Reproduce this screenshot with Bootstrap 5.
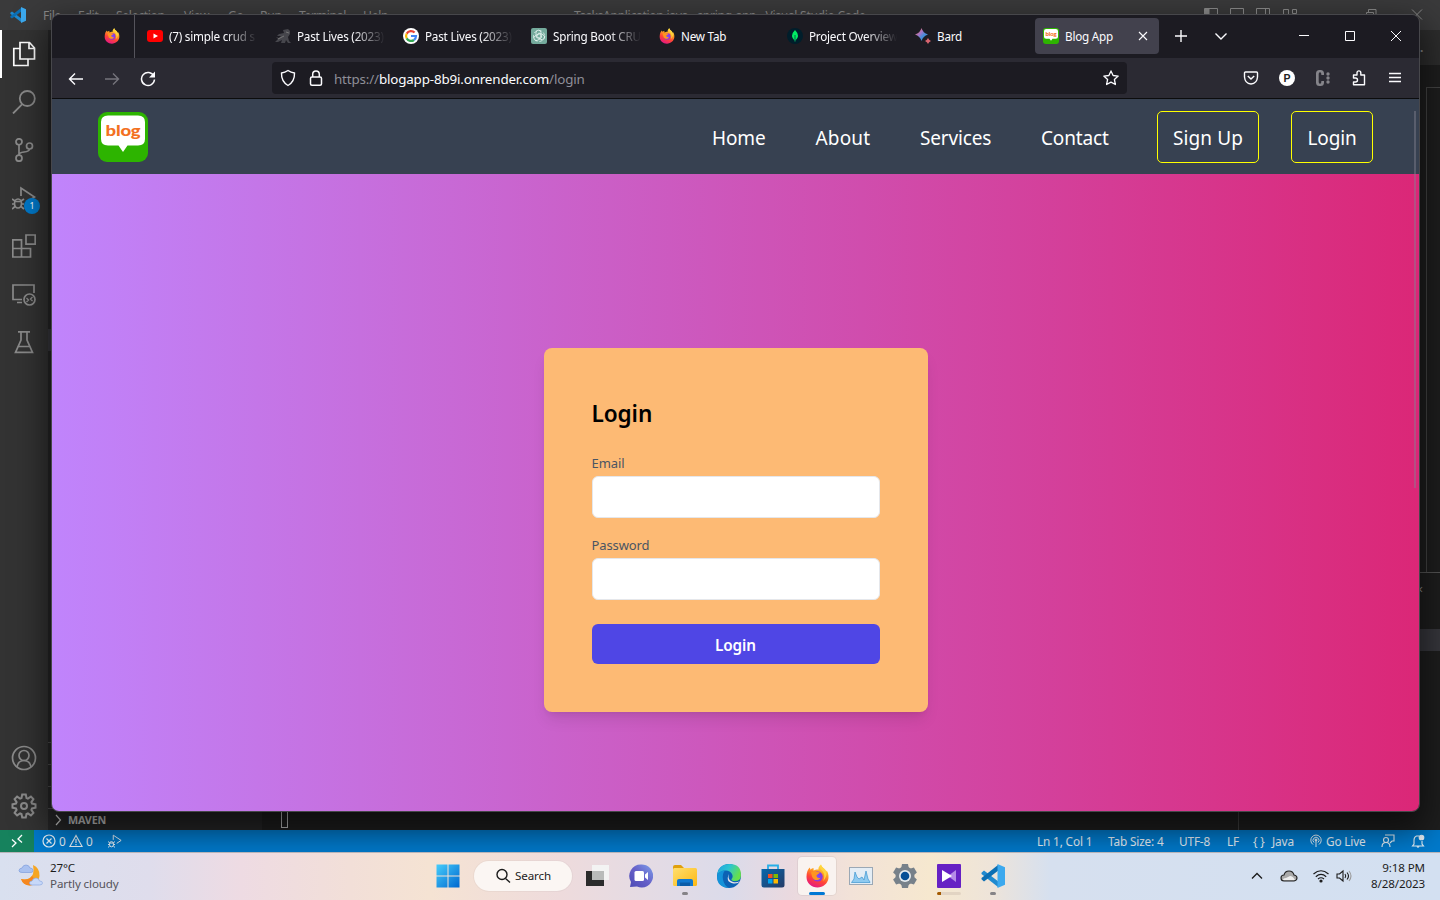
<!DOCTYPE html>
<html lang="en">
<head>
<meta charset="utf-8">
<title>Blog App</title>
<link href="https://cdn.jsdelivr.net/npm/bootstrap@5.3.0/dist/css/bootstrap.min.css" rel="stylesheet">
<style>
body{width:1440px;height:900px;overflow:hidden;background:#1e1e1e;font-family:"Noto Sans","Open Sans",sans-serif;font-size:12px;line-height:16px}
svg{display:block;flex:none}
.ln{fill:none;stroke:currentColor}
/* editor */
.code-win{height:852px;color:#8a8a8a}
.titlebar{height:30px;background:#3a3a3b;color:#8b8b8b;font-size:12.1px;letter-spacing:-.3px}
.titlebar span{white-space:nowrap;flex:none;padding-top:2px}
.activity{width:48px;background:#333;color:#8b8b8b}
.activity>div{height:48px;width:48px}
.activity .current{color:#fff;border-left:2px solid #fff}
.activity .current svg{margin-left:-2px}
.dot{left:24px;top:24px;width:16px;height:16px;background:#007acc;color:#fff;font-size:9px;border-radius:8px}
.side{width:214px;background:#252526}
.side .sec{height:22px;border-top:1px solid #4a4a4b}
.side .sel{height:22px;background:#37373d}
.maven{font-size:10.8px;font-weight:700;color:#c4c4c4;letter-spacing:-.2px}
.tabstrip{height:35px;background:#2d2d2d}
.mini{width:14px;height:485px;border:1px solid #444;border-right:0;border-bottom:0;margin-top:22px}
.panel-b{border-top:1px solid #555;height:258px}
.statusbar{height:22px;background:#007acc;color:#e8f1f8;font-size:11.8px;letter-spacing:-.15px}
.remote{width:34px;background:#16825d;color:#fff}
.statusbar .it{white-space:nowrap;flex:none}
/* browser */
.fx{left:51px;top:14px;width:1369px;height:798px;border:1px solid #47474b;border-radius:8px;overflow:hidden}
.fx-shadow{left:51px;top:14px;width:1369px;height:798px;border-radius:8px;box-shadow:0 14px 34px 5px rgba(0,0,0,.56);clip-path:inset(-20px -60px -40px -60px)}
.tabs-row{height:43px;background:#1c1b22;color:#fbfbfe;padding-bottom:1px}
.ftab{width:128px;flex:none;height:36px;font-size:11.7px;letter-spacing:-.22px}
.ftab .lbl{width:90px;white-space:nowrap;margin-left:6px}
.fade-r .lbl{-webkit-mask-image:linear-gradient(90deg,#000 62%,transparent 98%);mask-image:linear-gradient(90deg,#000 62%,transparent 98%)}
.ftab.on{width:124px;background:#42414d;border-radius:4px}
.pin{width:83px;height:43px;margin-bottom:-1px;border-right:1px solid #55545c;padding-right:14px}
.cap{width:46px}
.tools{height:40px;background:#2b2a33;color:#fbfbfe}
.tools .tb{width:36px}
.urlbar{width:855px;height:32px;background:#1c1b22;border-radius:4px;margin-left:106px}
.url{font-size:13.4px;color:#8f8f98;letter-spacing:-.16px;padding-top:2px}
.url b{font-weight:400;color:#fbfbfe}
/* page */
.site-nav{height:76px;border-top:1px solid #0c0c0d;background:#374151;color:#fff;font-size:19px;letter-spacing:-.15px}
.site-nav a{color:#fff;text-decoration:none;flex:none;white-space:nowrap}
.site-nav a.tx{padding-top:2px}
.site-nav a.ob{border:1px solid #ff0;border-radius:5px;height:52px;padding-top:2px}
.site-body{background:linear-gradient(90deg,#c084fc,#db2777)}
.login-box{width:384px;height:364px;padding:48px;background:#fdba74;border-radius:8px;box-shadow:0 10px 15px -3px rgba(0,0,0,.1),0 4px 6px -4px rgba(0,0,0,.1);margin-top:174px}
.login-box h1{font-size:22.6px;line-height:36px;height:32px;font-weight:600;color:#000;margin-bottom:24px;letter-spacing:-.1px}
.login-box label{display:block;font-size:13px;line-height:23px;height:24px;color:#4b5563;letter-spacing:-.1px}
.login-box .form-control{height:42px;border:1px solid #e5e7eb;border-radius:6px;background:#fff}
.login-box .btn{height:40px;background:#4f46e5;border:0;border-radius:6px;color:#fff;font-size:15.3px;font-weight:600;line-height:30px;letter-spacing:-.1px}
.thumb{left:1362px;top:96px;width:2px;height:377px;background:rgba(130,130,145,.45)}
/* taskbar */
.taskbar{height:48px;box-shadow:inset 0 1px #b8b4b8;color:#1b1b1b;font-size:11.6px;letter-spacing:-.12px;background:linear-gradient(90deg,#d9e0ef 0,#dfddec 150px,#eedbe3 240px,#f2dfd8 350px,#f5e3d3 430px,#eedbdc 560px,#e3dbe5 660px,#dbdbea 730px,#ead9df 790px,#f2e2d8 850px,#f6e8cf 930px,#eee4d9 990px,#d6e0ef 1050px,#d3e0f1 100%)}
.slot{width:44px;height:48px;flex:none}
.slot.act::before{content:"";position:absolute;left:3px;top:5px;width:38px;height:38px;border-radius:4px;background:#f9f3f0;box-shadow:0 0 0 1px rgba(0,0,0,.05)}
.slot svg{position:relative}
.run{height:3px;width:6px;border-radius:2px;background:#858387;top:40px;left:19px}
.act .run{width:16px;left:14px;background:#0078d4}
.find{width:98px;height:30px;border-radius:15px;background:#fbf6f3;margin:0 3px 0 4px;padding-left:21px;box-shadow:0 0 0 1px rgba(0,0,0,.03)}
.meteo{width:426px;padding-left:18px}
.clock{width:71px;padding-right:15px;line-height:16px;white-space:nowrap}
</style>
</head>
<body>
<svg width="0" height="0" class="position-absolute">
<defs>
<linearGradient id="gf" x1=".75" y1="0" x2=".3" y2="1"><stop offset="0" stop-color="#fff44f"/><stop offset=".35" stop-color="#ffa01f"/><stop offset=".65" stop-color="#ff4437"/><stop offset="1" stop-color="#e31587"/></linearGradient>
<radialGradient id="gp"><stop offset="0" stop-color="#7b4dff"/><stop offset="1" stop-color="#9035d8"/></radialGradient>
<linearGradient id="gw" x1="0" y1="0" x2="1" y2="1"><stop offset="0" stop-color="#45cdfb"/><stop offset="1" stop-color="#0067cf"/></linearGradient>
<linearGradient id="ge" x1="0" y1="0" x2="1" y2=".4"><stop offset="0" stop-color="#1fa0e0"/><stop offset=".5" stop-color="#2bc4d2"/><stop offset="1" stop-color="#66e04c"/></linearGradient>
<linearGradient id="gb" x1="0" y1="0" x2="1" y2="1"><stop offset="0.1" stop-color="#e07050"/><stop offset=".4" stop-color="#a675c8"/><stop offset=".6" stop-color="#4b8bd8"/><stop offset="1" stop-color="#2b9ad8"/></linearGradient>
<linearGradient id="gy" x1="0" y1="0" x2="1" y2="1"><stop offset="0" stop-color="#ffdf6e"/><stop offset="1" stop-color="#fdb813"/></linearGradient>
<linearGradient id="gc" x1="1" y1="0" x2="0" y2="1"><stop offset="0" stop-color="#7ea1ec"/><stop offset=".5" stop-color="#6660c8"/><stop offset="1" stop-color="#4b49b5"/></linearGradient>
<linearGradient id="gs" x1="0" y1="0" x2="1" y2="1"><stop offset="0" stop-color="#0668ad"/><stop offset="1" stop-color="#263a66"/></linearGradient>
<symbol id="fox" viewBox="0 0 24 24"><path fill="url(#gf)" d="M1 13C1 8.500 2.500 5 4.300 3.600L5 5.800C6 4.700 7 4.200 8 4L8.200 6.700C10 5.200 12 5.500 13 5.500C12.500 3.500 14 1.500 15.500.5C15.700 2.600 17.400 3.600 19 5C20 6 20.200 7 20.400 8L21.200 6.500C22.500 8.500 23.300 11 23 14C22.400 19.600 17.500 23.500 12 23.500C6 23.500 1 19 1 13Z"/><circle cx="12.200" cy="12.600" r="5" fill="url(#gp)"/><path fill="#ff9620" d="M5.500 8.500C7.500 7 10 7.200 11.500 8L14.500 8.300C14 10 11.500 10.300 11 11.400C11 13.300 12.500 14.500 15 13.700C13.500 17 8 17 6.700 13Z"/><path fill="#ffd33d" d="M15.500.5C14.200 2.700 14.500 4.700 16.500 6.500C19 9 19.600 13 17.600 17C21 13.500 22 9 20 6C18.500 4 16 3 15.500.5Z"/></symbol>
<symbol id="vsc" viewBox="0 0 24 24"><path fill="#1f8ad0" d="M.5 8.800 3 6.600 17 17.200V23L.5 10z"/><path fill="#0b6fb4" d="M.5 15.200 3 17.400 17 6.800V1L.5 14z"/><path fill="#3ca9ee" d="M16.500 0 24 3.300V20.700L16.500 24z"/></symbol>
<symbol id="blog" viewBox="0 0 50 50"><rect width="50" height="50" rx="9" fill="#2db400"/><path fill="#fff" d="M10 3.500H40Q47 3.500 47 10V27Q47 33.500 40 33.500H29.500L25 40L20.500 33.500H10Q3 33.500 3 27V10Q3 3.500 10 3.500Z"/><text x="25" y="24" text-anchor="middle" textLength="35" lengthAdjust="spacingAndGlyphs" font-family="Lato,sans-serif" font-weight="900" font-size="15.500" fill="#f37021">blog</text></symbol>
<symbol id="bug" viewBox="0 0 24 24"><g class="ln" stroke-width="1.700"><path d="M9 10V2L22.500 11 15 16"/><ellipse cx="6" cy="17.500" rx="3.500" ry="4.500"/><path d="M3 15.500H9M0 13 3 15M12 13 9 15M0 18H3M9 18H12M0 23 3 20.500M12 23 9 20.500"/></g></symbol>
</defs></svg>

<div class="d-flex flex-column position-relative">
<main class="code-win d-flex flex-column">
  <div class="titlebar d-flex align-items-center">
    <svg width="16" height="16" style="margin-left:10px"><use href="#vsc"/></svg>
    <span class="ms-3" style="width:36px;padding-left:1px">File</span><span style="width:38px">Edit</span><span style="width:68px">Selection</span><span style="width:44px">View</span><span style="width:32px">Go</span><span style="width:39px">Run</span><span style="width:64px">Terminal</span><span style="width:211px">Help</span>
    <span style="width:629px">TasksApplication.java - spring-app - Visual Studio Code</span>
    <svg class="ln" width="237" height="30" viewBox="0 0 237 30"><path d="M1.500 8.500h13v12H1.500zM27.500 8.500h13v12h-13zM53.500 8.500h13v12h-13zM62.500 8.500v12M80.500 9.500h5v9h-5zM89.500 9.500h4v4h-4zM117 14.500h10M163.500 12.500h7v7h-7zM165.500 12V9.500h7.500v7H171M209 9.500l10 10M219 9.500l-10 10"/><path fill="currentColor" d="M2 9h4v11H2z"/></svg>
  </div>
  <div class="d-flex flex-grow-1">
    <aside class="activity d-flex flex-column">
      <div class="current d-flex align-items-center justify-content-center"><svg class="ln" width="24" height="26" viewBox="0 0 24 26" stroke-width="1.700"><path d="M8 1.500h9.500L22.500 7v11H8zM17 2v5.500h5M8 7.500H1.800V24.500H16V18.500"/></svg></div>
      <div class="d-flex align-items-center justify-content-center"><svg class="ln" width="24" height="24" stroke-width="1.800"><circle cx="15.300" cy="8.500" r="7.500"/><path d="M10 14.300 1 23.500"/></svg></div>
      <div class="d-flex align-items-center justify-content-center"><svg class="ln" width="24" height="24" stroke-width="1.700"><circle cx="7" cy="3.800" r="3"/><circle cx="7" cy="20.200" r="3"/><circle cx="17.500" cy="8" r="3"/><path d="M7 6.800v10.500M7 17c0-5 10-1 10.500-6"/></svg></div>
      <div class="d-flex align-items-center justify-content-center position-relative"><svg width="24" height="24"><use href="#bug"/></svg><span class="dot position-absolute d-flex align-items-center justify-content-center">1</span></div>
      <div class="d-flex align-items-center justify-content-center"><svg class="ln" width="24" height="24" stroke-width="1.700"><path d="M.8 5.800h8.700v8.700h9V23H.8zM.8 14.500h8.700V23M14 1h9.200v9.200H14z"/></svg></div>
      <div class="d-flex align-items-center justify-content-center"><svg class="ln" width="24" height="24" stroke-width="1.700"><path d="M10 17.500H1V3h21v8M5 20.500h5"/><circle cx="17.500" cy="17.500" r="5.500"/><path stroke-width="1.300" d="m14.500 16 2 2-2 2M20.500 15l-2 2 2 2"/></svg></div>
      <div class="d-flex align-items-center justify-content-center"><svg class="ln" width="24" height="24" stroke-width="1.700"><path d="M6 1.800h12M9 2v8L3.500 22.300h17L15 10V2M6 16.500h12"/></svg></div>
      <div class="d-flex align-items-center justify-content-center mt-auto"><svg class="ln" width="26" height="26" viewBox="0 0 26 26" stroke-width="1.700"><circle cx="13" cy="13" r="11.500"/><circle cx="13" cy="10.500" r="5"/><path d="M6 22c.5-4 3.500-6.500 7-6.500s6.500 2.500 7 6.500"/></svg></div>
      <div class="d-flex align-items-center justify-content-center"><svg class="ln" width="26" height="26" viewBox="-13 -13 26 26" stroke-width="2"><path d="M-2.500-8-1.800-11.500H1.800L2.500-8 3.900-7.400 6.900-9.400 9.400-6.900 7.400-3.900 8-2.500 11.500-1.800V1.800L8 2.500 7.400 3.900 9.400 6.900 6.900 9.400 3.900 7.400 2.500 8 1.800 11.500H-1.800L-2.500 8-3.900 7.400-6.900 9.400-9.400 6.900-7.400 3.900-8 2.500-11.500 1.800V-1.800L-8-2.500-7.400-3.900-9.400-6.900-6.900-9.400-3.900-7.400Z"/><circle r="3"/></svg></div>
    </aside>
    <section class="side d-flex flex-column">
      <div class="sel" style="margin-top:299px"></div>
      <div class="sec mt-auto"></div><div class="sec"></div><div class="sec"></div>
      <div class="sec maven d-flex align-items-center"><svg class="ln ms-1 me-1" width="12" height="12" stroke-width="1.200"><path d="m4 1 4.500 5L4 11"/></svg>MAVEN</div>
    </section>
    <section class="flex-grow-1 d-flex flex-column">
      <div class="tabstrip d-flex align-items-center justify-content-end fw-bold"><span style="width:20px">.</span></div>
      <div class="d-flex justify-content-end flex-grow-1"><div class="mini"></div></div>
      <div class="panel-b d-flex">
        <div class="d-flex align-items-end" style="width:977px;border-right:1px solid #3f3f3f"><span style="width:7px;height:18px;border:1px solid #bbb;margin:0 0 2px 19px"></span></div>
        <div class="flex-grow-1"><div class="text-end" style="padding:9px 17px 0 0;height:56px">×</div><div style="height:22px;background:#37373d"></div></div>
      </div>
    </section>
  </div>
  <footer class="statusbar d-flex align-items-stretch">
    <div class="remote d-flex align-items-center justify-content-center"><svg class="ln" width="14" height="14" stroke-width="1.300"><path d="m2 5.500 4 3.500-4 4M12 1 8 5l4 3.500"/></svg></div>
    <div class="d-flex align-items-center flex-grow-1 ps-2"><svg class="ln" width="14" height="14" stroke-width="1.200"><circle cx="7" cy="7" r="6"/><path d="m4.500 4.500 5 5m0-5-5 5"/></svg><span style="width:13px;padding-left:3px">0</span><svg class="ln" width="14" height="14" stroke-width="1.200"><path d="M7 1.500.9 12.500h12.200zM7 5v4M7 10v1.300"/></svg><span style="width:25px;padding-left:3px">0</span><svg width="14" height="14"><use href="#bug"/></svg></div>
    <div class="d-flex align-items-center" style="width:403px"><span class="it" style="width:71px">Ln 1, Col 1</span><span class="it" style="width:71px">Tab Size: 4</span><span class="it" style="width:48px">UTF-8</span><span class="it" style="width:26px">LF</span><span class="it" style="width:19px">{ }</span><span class="it" style="width:38px">Java</span><svg class="ln" width="12" height="14" stroke-width="1"><path d="M3 10.500a5.200 5.200 0 1 1 6 0M4 8.500a3 3 0 1 1 4 0M6 6v7"/><circle cx="6" cy="6" r="1" fill="currentColor"/></svg><span class="it" style="width:59px;padding-left:4px">Go Live</span><svg class="ln me-3" width="14" height="14" stroke-width="1.100"><path d="M4 1h9v6h-2L9 9M1 13c0-6 8-6 8 0"/><circle cx="5" cy="6" r="2.500"/></svg><svg class="ln" width="14" height="14" stroke-width="1.100"><path d="M8 2H5.500Q3 3 3 6v4l-1.500 2h11L11 10V7M6 12.500q1 1.500 2 0"/><circle cx="10.500" cy="3.500" r="2.300" fill="currentColor"/></svg></div>
  </footer>
</main>
<div class="fx-shadow position-absolute"></div>

<section class="fx position-absolute d-flex flex-column">
  <div class="tabs-row d-flex align-items-center">
    <div class="pin d-flex align-items-center justify-content-end"><svg width="16" height="16" style="margin-top:-2px"><use href="#fox"/></svg></div>
    <div class="d-flex" style="padding-left:4px">
      <div class="ftab fade-r ps-2 d-flex align-items-center"><svg width="16" height="16"><rect y="2" width="16" height="12" rx="3" fill="red"/><path fill="#fff" d="m6.500 5.500 4.500 2.500-4.500 2.500z"/></svg><span class="lbl">(7) simple crud s</span></div>
      <div class="ftab fade-r ps-2 d-flex align-items-center"><svg width="16" height="16"><path fill="#46464c" d="M9 5 8 2l5-1 2 2v3l-2 3 1 4 2 2h-3l-2-3-1 3H6l1-3-4 2H0l3-3-2-2 3 1 2-2H2l2-2z"/><path stroke="#777" d="m11 4 3 1M3 11l6-3"/></svg><span class="lbl">Past Lives (2023)</span></div>
      <div class="ftab fade-r ps-2 d-flex align-items-center"><svg width="16" height="16"><circle cx="8" cy="8" r="8" fill="#fff"/><g fill="none" stroke-width="2.200"><path stroke="#ea4335" d="M3.700 5.600A5 5 0 0 1 11.600 4.600"/><path stroke="#fbbc05" d="M3.700 5.600A5 5 0 0 0 3.700 10.400"/><path stroke="#34a853" d="M3.700 10.400A5 5 0 0 0 11 12"/><path stroke="#4285f4" d="M11 12A5 5 0 0 0 13 8H8"/></g></svg><span class="lbl">Past Lives (2023)</span></div>
      <div class="ftab fade-r ps-2 d-flex align-items-center"><svg width="16" height="16"><rect width="16" height="16" rx="2" fill="#74aa9c"/><g transform="translate(8 8)" fill="none" stroke="#e8f5f2" stroke-width=".8"><rect x="-3" y="-5.800" width="5" height="8" rx="2.500"/><rect x="-3" y="-5.800" width="5" height="8" rx="2.500" transform="rotate(120)"/><rect x="-3" y="-5.800" width="5" height="8" rx="2.500" transform="rotate(240)"/><circle r="5.500" stroke-dasharray="3 2"/></g></svg><span class="lbl">Spring Boot CRU</span></div>
      <div class="ftab ps-2 d-flex align-items-center"><svg width="16" height="16"><use href="#fox"/></svg><span class="lbl">New Tab</span></div>
      <div class="ftab fade-r ps-2 d-flex align-items-center"><svg width="16" height="16"><circle cx="8" cy="8" r="8" fill="#001e2b"/><path fill="#00ed64" d="M8 2q6 6 0 11Q2 8 8 2z"/><path stroke="#00684a" d="M8 7v7"/></svg><span class="lbl">Project Overview</span></div>
      <div class="ftab ps-2 d-flex align-items-center"><svg width="16" height="16"><path fill="url(#gb)" d="M6.500 0Q8 5 13 6.500 8 8 6.500 13 5 8 0 6.500 5 5 6.500 0z"/><path fill="#d96570" d="M13 10q.8 2.200 3 3-2.200.8-3 3-.8-2.200-3-3 2.200-.8 3-3z"/></svg><span class="lbl">Bard</span></div>
      <div class="ftab on ps-2 d-flex align-items-center"><svg width="16" height="16"><use href="#blog"/></svg><span class="lbl" style="width:73px">Blog App</span><svg class="ln" width="10" height="10" stroke-width="1.100"><path d="m1 1 8 8m0-8-8 8"/></svg></div>
    </div>
    <svg class="ln" width="76" height="16" style="margin-left:8px" stroke-width="1.400"><path d="M14 2v12M8 8h12M48.500 5.500 54 11l5.500-5.500"/></svg>
    <div class="d-flex ms-auto"><div class="cap d-flex justify-content-center"><svg class="ln" width="12" height="12"><path d="M1 5.500h10"/></svg></div><div class="cap d-flex justify-content-center"><svg class="ln" width="12" height="12"><path d="M1.500 1.500h9v9h-9z"/></svg></div><div class="cap d-flex justify-content-center"><svg class="ln" width="12" height="12"><path d="m1 1 10 10M11 1 1 11"/></svg></div></div>
  </div>
  <div class="tools d-flex align-items-center">
    <div class="d-flex" style="padding:1px 0 0 6px"><div class="tb d-flex justify-content-center"><svg class="ln" width="16" height="16" stroke-width="1.400"><path d="M15 8H1.500M7 2.500 1.500 8 7 13.500"/></svg></div><div class="tb d-flex justify-content-center"><svg class="ln" width="16" height="16" stroke-width="1.400" style="color:#75747c"><path d="M1 8h13.500M9 2.500 14.500 8 9 13.500"/></svg></div><div class="tb d-flex justify-content-center"><svg class="ln" width="16" height="16" stroke-width="1.500"><path d="M13.800 5A6.500 6.500 0 1 0 14.500 8.500"/><path fill="currentColor" stroke="none" d="M15 .5V6.500H9z"/></svg></div></div>
    <div class="urlbar d-flex align-items-center"><svg class="ln ms-2" width="16" height="18" stroke-width="1.400"><path d="M8 1.500Q11 3.500 14.500 4 14.800 12.500 8 16.500 1.200 12.500 1.500 4 5 3.500 8 1.500z"/></svg><svg class="ln" width="14" height="16" style="margin:0 11px 0 13px" stroke-width="1.500"><rect x="1.500" y="7" width="11" height="8.200" rx="1.500"/><path d="M3.700 7V4.200a3.300 3.300 0 0 1 6.600 0V7"/></svg><span class="url"><span>https://</span><b>blogapp-8b9i.onrender.com</b>/login</span><svg class="ln ms-auto me-2" width="16" height="16" stroke-width="1.300" stroke-linejoin="round"><path d="m8 .9 2.100 4.600 5.100.6-3.800 3.400 1 5L8 12.100l-4.400 2.400 1-5L.8 6.100l5.100-.6z"/></svg></div>
    <div class="d-flex align-items-center" style="margin-left:106px">
      <div class="tb d-flex justify-content-center"><svg class="ln" width="16" height="16" stroke-width="1.400"><path d="M2.500 2h11q1 0 1 1v4q-.5 6.500-6.500 7Q2 13.500 1.500 7V3q0-1 1-1zM4.800 6 8 9l3.200-3"/></svg></div>
      <div class="tb d-flex justify-content-center"><svg width="16" height="16"><circle cx="8" cy="8" r="8" fill="#fff"/><text x="8" y="11.800" text-anchor="middle" font-size="10.500" font-weight="700" fill="#222" font-family="Liberation Sans">P</text></svg></div>
      <div class="tb d-flex justify-content-center"><svg width="16" height="16" fill="#85848a"><path d="M4.500 0h1Q9 0 9 3.500V5H6.300V4Q6.300 2.200 5 2.200T3.700 4v8q0 1.800 1.300 1.800T6.300 12v-1H9v1.500Q9 16 5.500 16h-1Q1 16 1 12.500v-9Q1 0 4.500 0z"/><circle cx="13" cy="4" r="1.700"/><circle cx="13" cy="8" r="1.700"/><circle cx="13" cy="12" r="1.700"/></svg></div>
      <div class="tb d-flex justify-content-center"><svg class="ln" width="16" height="16" stroke-width="1.400" stroke-linejoin="round"><path d="M2.500 8V5H6V2.800a1.900 1.900 0 0 1 3.800 0V5h3.700v9.700h-11V12h2a2 2 0 0 0 0-4z"/></svg></div>
      <div class="tb d-flex justify-content-center"><svg class="ln" width="14" height="14" stroke-width="1.300"><path d="M1 2.500h12M1 6.500h12M1 10.500h12"/></svg></div>
    </div>
  </div>
  <nav class="site-nav d-flex align-items-center">
    <a href="#" style="margin-left:46px"><svg width="50" height="50"><use href="#blog"/></svg></a>
    <a href="#" class="tx ms-auto" style="width:103.500px">Home</a><a href="#" class="tx" style="width:104.500px;letter-spacing:.15px">About</a><a href="#" class="tx" style="width:121px">Services</a><a href="#" class="tx" style="width:116px">Contact</a>
    <a href="#" class="ob d-flex align-items-center justify-content-center" style="width:102px;margin-right:32px;letter-spacing:.1px">Sign Up</a><a href="#" class="ob d-flex align-items-center justify-content-center" style="width:82px;margin-right:46px">Login</a>
  </nav>
  <div class="site-body flex-grow-1 d-flex justify-content-center align-items-start">
    <form class="login-box"><h1>Login</h1>
      <label for="em">Email</label><input id="em" type="email" class="form-control mb-3">
      <label for="pw">Password</label><input id="pw" type="password" class="form-control mb-4">
      <button type="button" class="btn w-100">Login</button></form>
  </div>
  <div class="thumb position-absolute"></div>
</section>

<footer class="taskbar d-flex align-items-center position-relative">
  <div class="meteo d-flex align-items-center"><svg width="26" height="26" viewBox="0 0 26 26"><path fill="#f6a623" d="M15 2q7 3 6.500 11T12 22.500Q5 22 3 16q9 2 12-5 1-4 0-9z"/><path fill="#f5871f" d="M3 16q8 2 11-3l5 6q-3 3.500-7 3.500Q5 22 3 16z"/><path fill="#a9c1f0" stroke="#7e9ddd" stroke-width=".7" d="M4 9.500Q1 9.500 1 7.500T4 5q1-3 4-3t4 3q3 0 3 2.500t-3 2z"/><path fill="#c7d8f8" stroke="#8eaae3" stroke-width=".7" d="M14 22q-2.500 0-2.500-2T14 18q1-3 4-3t3.500 3q3 0 3 2t-3 2z"/></svg><div style="margin-left:6px"><div>27°C</div><div style="color:#55535a">Partly cloudy</div></div></div>
  <div class="slot position-relative d-flex align-items-center justify-content-center"><svg width="24" height="24"><path fill="url(#gw)" d="M.5.500h11v11H.5zM12.500.500h11v11h-11zM.5 12.500h11v11H.5zM12.500 12.500h11v11h-11z"/></svg></div>
  <div class="find d-flex align-items-center flex-shrink-0"><svg class="ln me-1" width="16" height="16" stroke-width="1.400"><circle cx="7" cy="6.500" r="5"/><path d="m10.500 10.500 4.500 4"/></svg>Search</div>
  <div class="slot position-relative d-flex align-items-center justify-content-center"><svg width="24" height="24"><path fill="#2b2b2b" d="M1 7h18v15H1z"/><path fill="#f3f3f3" d="M7 1h17v15H7z"/><path fill="#b9bbba" d="M7 7h12v9H7z"/></svg></div>
  <div class="slot position-relative d-flex align-items-center justify-content-center"><svg width="24" height="24"><path fill="url(#gc)" d="M12 .5a11.500 11.500 0 1 1-4 22L1 23l1-5A11.500 11.500 0 0 1 12 .5z"/><rect x="5.500" y="7" width="9.500" height="10" rx="1.500" fill="#fff"/><path fill="#fff" d="m16 10.500 3-2.500v8l-3-2.500z"/></svg></div>
  <div class="slot position-relative d-flex align-items-center justify-content-center"><svg width="24" height="24"><path fill="#e0a00c" d="M0 3q0-2 2-2h6l3 3v4H0z"/><rect y="4" width="24" height="18" rx="1.500" fill="url(#gy)"/><path fill="#1078d0" d="M4 22v-5q0-2 2-2h12q2 0 2 2v5z"/><path fill="#0a5ca8" d="M7 18.500h10V22H7z"/></svg><i class="run position-absolute"></i></div>
  <div class="slot position-relative d-flex align-items-center justify-content-center"><svg width="24" height="24"><circle cx="12" cy="12" r="12" fill="#0c62b4"/><path fill="url(#ge)" d="M0 12Q1 0 12.500 0T24 11q0 6-6 6-4 0-3.500-2 2-2 .5-5-2-3.500-6-3.500Q2 6.500 0 12z"/><path fill="#1492d9" d="M0 13Q0 7 8 6.500q-3 3-2 9 1 6 6 8.500Q0 23 0 13z"/><path fill="#e8e4eb" d="M12 10q-2 6 4 8 4 1 7-1-2 3-6.500 2.500Q8 18 12 10z"/></svg></div>
  <div class="slot position-relative d-flex align-items-center justify-content-center"><svg width="24" height="24"><path fill="none" stroke="#28afe8" stroke-width="1.800" d="M7 6V1.500h10V6"/><path fill="url(#gs)" d="M.5 5h23v16q0 2.500-2.500 2.500H3Q.5 23.500.5 21z"/><path fill="#f25022" d="M7 10h4.500v4H7z"/><path fill="#7fba00" d="M12.500 10H17v4h-4.500z"/><path fill="#00a4ef" d="M7 15h4.500v4.500H7z"/><path fill="#ffb900" d="M12.500 15H17v4.500h-4.500z"/></svg></div>
  <div class="slot act position-relative d-flex align-items-center justify-content-center"><svg width="25" height="24"><use href="#fox"/></svg><i class="run position-absolute"></i></div>
  <div class="slot position-relative d-flex align-items-center justify-content-center"><svg width="24" height="24"><rect x=".5" y="3.500" width="23" height="17" fill="#e4edf5" stroke="#9ba8b5"/><path fill="#8ecaf0" stroke="#3c95d0" stroke-width=".7" d="M2.500 18.500 5 15l1-7 2 5 2 2 3-2 2 3 2-9 2 8 2 3v.5z"/></svg></div>
  <div class="slot position-relative d-flex align-items-center justify-content-center"><svg width="24" height="24" viewBox="-12 -12 24 24"><g fill="#77818a"><circle r="9.500"/><path id="t" d="M-3-12H3L4-7H-4z"/><use href="#t" transform="rotate(60)"/><use href="#t" transform="rotate(120)"/><use href="#t" transform="rotate(180)"/><use href="#t" transform="rotate(240)"/><use href="#t" transform="rotate(300)"/></g><circle r="6" fill="#e6ebee"/><circle r="4.300" fill="#064f96"/></svg></div>
  <div class="slot position-relative d-flex align-items-center justify-content-center"><svg width="24" height="24"><rect width="24" height="24" rx="1" fill="#6621c4"/><path fill="#b58be8" d="M19 6v12l-8-6z"/><path fill="#fff" d="M5 6v12l10-6z"/></svg><i class="run position-absolute" style="left:10px;width:24px;background:linear-gradient(90deg,#a35a00 4px,#e2d4c3 4px)"></i></div>
  <div class="slot position-relative d-flex align-items-center justify-content-center"><svg width="24" height="24"><use href="#vsc"/></svg><i class="run position-absolute"></i></div>
  <div class="d-flex align-items-center ms-auto"><svg class="ln" width="12" height="12" stroke-width="1.300"><path d="m1 8.500 5-5 5 5"/></svg><svg width="18" height="14" style="margin-left:17px"><path fill="#aaa" stroke="#222" stroke-width="1.100" d="M4 12Q1 12 1 9t3-3q1-4 5-4t5 4q3 .5 3 3t-3 3z"/><path fill="#eee" d="M3 11q0-2 3-2l4-2q3 0 5 4z"/></svg><svg class="ln" width="18" height="14" style="margin-left:14px" stroke-width="1.200"><path d="M1.500 5q7.500-6.500 15 0M3.800 7.700q5.200-4.500 10.400 0M6 10q3-2.500 6 0"/><circle cx="9" cy="12" r="1" fill="currentColor"/></svg><svg class="ln" width="16" height="14" style="margin:0 17px 0 6px" stroke-width="1.100"><path d="M1 5v4h2.500L7 12V2L3.500 5zM9 5q1.500 2 0 4M11 3.500q3 3.500 0 7"/><path stroke="#999" d="M13 2q4 5 0 10"/></svg></div>
  <div class="clock text-end"><div>9:18 PM</div><div>8/28/2023</div></div>
</footer>
</div>
<script src="https://cdn.jsdelivr.net/npm/bootstrap@5.3.0/dist/js/bootstrap.bundle.min.js"></script>
</body>
</html>
